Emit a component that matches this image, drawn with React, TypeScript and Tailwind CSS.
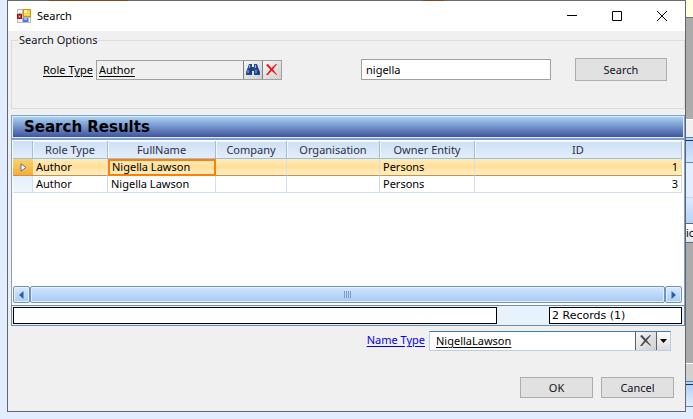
import React from "react";

type Row = { role: string; name: string; company: string; org: string; entity: string; id: number };

const rows: Row[] = [
  { role: "Author", name: "Nigella Lawson", company: "", org: "", entity: "Persons", id: 1 },
  { role: "Author", name: "Nigella Lawson", company: "", org: "", entity: "Persons", id: 3 },
];

const columns = ["Role Type", "FullName", "Company", "Organisation", "Owner Entity", "ID"];

function FormIcon() {
  return (
    <svg width="14" height="14" viewBox="0 0 14 14" shapeRendering="crispEdges" aria-hidden="true">
      <rect width="14" height="14" fill="#b9babd" />
      <rect x="1" y="1" width="4" height="3" fill="#f4f4f6" />
      <rect x="1" y="10" width="4" height="3" fill="#f4f4f6" />
      <rect x="12" y="9" width="1" height="4" fill="#f4f4f6" />
      <rect x="6" y="0" width="8" height="8" fill="#c79512" />
      <rect x="7" y="1" width="6" height="6" fill="#fbd643" />
      <rect x="7" y="1" width="3" height="3" fill="#fff0a0" />
      <rect x="0" y="5" width="5" height="5" fill="#a01414" />
      <rect x="1" y="6" width="3" height="3" fill="#d63a2e" />
      <rect x="2" y="7" width="1" height="1" fill="#ffd0c8" />
      <rect x="6" y="9" width="5" height="4" fill="#3f7fe0" />
      <rect x="7" y="9" width="3" height="2" fill="#8fbcff" />
    </svg>
  );
}

function BinocularsIcon() {
  return (
    <svg width="14" height="13" viewBox="0 0 14 13" aria-hidden="true">
      <path d="M3 1h3v3h2V1h3l1 3 2 5v3H8V8H6v4H0V9l2-5z" fill="#26488c" />
      <path d="M3.500 2v3M9.500 2v3M2 7v3M10 7v3" stroke="#8fb4e8" strokeWidth="1" />
      <path d="M5 5v6M12 8v3" stroke="#122c66" strokeWidth="1" />
    </svg>
  );
}

function CrossIcon({ color }: { color: string }) {
  return (
    <svg width="12" height="12" viewBox="0 0 12 12" aria-hidden="true">
      <path d="M0 1 2 0 5.500 4 10 0 11 .5 6.800 5.300 11 10.500 10.500 11 5.500 6.800 2 11 0 11 4.300 5.500z" fill={color} />
    </svg>
  );
}

const toolButton = "flex items-center justify-center bg-linear-to-br from-[#f7f7f8] to-[#cfcfd1]";
const pushButton = "border border-[#adadad] bg-[#e1e1e1] text-center text-[#10101c]";
const scrollButton =
  "flex w-[17px] items-center justify-center rounded-[2px] border border-[#6f93c0] bg-linear-to-b from-[#d9e9fc] to-[#a9cdf6] shadow-[inset_0_0_0_1px_#e4f0fd]";

function TitleBar() {
  return (
    <header className="flex h-[30px] items-center bg-white pl-[9px] text-black">
      <FormIcon />
      <h1 className="flex-1 pl-[6px]">Search</h1>
      <button aria-label="Minimize" className="flex h-full w-[45px] items-center justify-center">
        <svg width="10" height="10" viewBox="0 0 10 10"><path d="M0 4.500h10" stroke="#000" /></svg>
      </button>
      <button aria-label="Maximize" className="flex h-full w-[45px] items-center justify-center">
        <svg width="10" height="10" viewBox="0 0 10 10"><path d="M.5.500h9v9h-9z" fill="none" stroke="#000" /></svg>
      </button>
      <button aria-label="Close" className="flex h-full w-[46px] items-center justify-center">
        <svg width="10" height="10" viewBox="0 0 10 10"><path d="M0 0l10 10M10 0L0 10" stroke="#000" /></svg>
      </button>
    </header>
  );
}

function SearchOptions() {
  return (
    <fieldset className="ml-[3px] h-[77px] border border-[#dcdcdc] px-[7px]">
      <legend className="leading-[16px] text-[#10101c]">Search Options</legend>
      <div className="flex items-center pr-[10px] pl-[24px] pt-[10px]">
        <label htmlFor="role" className="w-[53px] shrink-0 pt-px underline underline-offset-2">Role Type</label>
        <div className="flex h-[20px] w-[186px] shrink-0 border border-[#a0a0a0]">
          <input id="role" readOnly defaultValue="Author" className="min-w-0 flex-1 bg-transparent pt-px pl-[2px] underline underline-offset-2 outline-none" />
          <button aria-label="Find role type" className={`${toolButton} w-[19px] border-l border-[#808080]`}><BinocularsIcon /></button>
          <button aria-label="Clear role type" className={`${toolButton} w-[19px] border-l border-[#808080]`}><CrossIcon color="#f01414" /></button>
        </div>
        <input aria-label="Search text" defaultValue="nigella" className="ml-auto h-[21px] w-[190px] border border-[#a0a0a0] bg-white pl-[4px] outline-none" />
        <button className={`${pushButton} ml-[24px] h-[23px] w-[92px]`}>Search</button>
      </div>
    </fieldset>
  );
}

function ResultsTable() {
  return (
    <table className="w-full table-fixed border-separate border-spacing-0">
      <colgroup>
        <col className="w-[20px]" />
        <col className="w-[75px]" />
        <col className="w-[108px]" />
        <col className="w-[71px]" />
        <col className="w-[93px]" />
        <col className="w-[95px]" />
        <col />
      </colgroup>
      <thead>
        <tr className="h-[18px] text-[#2c2f4a]">
          <td className="border-r border-b border-[#9cbfe0] bg-linear-to-b from-[#cddff3] to-[#e3eefc] p-0" />
          {columns.map((c) => (
            <th key={c} scope="col" className="border-r border-b border-[#9cbfe0] bg-linear-to-b from-[#cddff3] to-[#e3eefc] p-0 text-center font-normal shadow-[inset_1px_1px_0_#f4f9ff]">
              {c}
            </th>
          ))}
        </tr>
      </thead>
      <tbody>
        {rows.map((r, i) => {
          const active = i === 0;
          const cell = active
            ? "border-r border-r-[#cfdff0] border-b border-b-[#dc8a40] bg-linear-to-b from-[#ffecb8] via-[#ffe09a] to-[#fff0c4] px-[3px] py-0"
            : "border-r border-b border-[#cfdff0] bg-white px-[3px] py-0";
          return (
            <tr key={r.id} className="h-[17px] leading-[16px]">
              <td className={active ? "border-b border-b-[#dc8a40] bg-linear-to-b from-[#fbd26c] to-[#f3ae35] p-0" : "border-r border-b border-[#cfdff0] bg-linear-to-b from-[#e3eefc] to-[#f0f6fe] p-0"}>
                {active && (
                  <svg className="mx-auto" width="7" height="9" viewBox="0 0 7 9" aria-label="Current row"><path d="M1 .8 5.800 4.500 1 8.200z" fill="#fff" stroke="#5b6f94" /></svg>
                )}
              </td>
              <td className={cell}>{r.role}</td>
              <td className={active ? `${cell} pl-[4px] outline-2 -outline-offset-2 outline-[#ff8000]` : cell}>{r.name}</td>
              <td className={cell}>{r.company}</td>
              <td className={cell}>{r.org}</td>
              <td className={cell}>{r.entity}</td>
              <td className={`${cell} text-right`}>{r.id}</td>
            </tr>
          );
        })}
      </tbody>
    </table>
  );
}

function ScrollBar() {
  return (
    <div className="mr-[2px] flex h-[17px]">
      <button aria-label="Scroll left" className={scrollButton}>
        <svg width="5" height="8" viewBox="0 0 5 8"><path d="M4.500 0v8L0 4z" fill="#2c5ea8" /></svg>
      </button>
      <div className="flex flex-1 items-center justify-center gap-px rounded-[2px] border border-[#6f93c0] bg-linear-to-b from-[#d3e6fc] to-[#a3caf5] shadow-[inset_0_0_0_1px_#e4f0fd]">
        <i className="h-[7px] w-px bg-[#7a9cc8]" />
        <i className="h-[7px] w-px bg-[#7a9cc8]" />
        <i className="h-[7px] w-px bg-[#7a9cc8]" />
        <i className="h-[7px] w-px bg-[#7a9cc8]" />
      </div>
      <button aria-label="Scroll right" className={scrollButton}>
        <svg width="5" height="8" viewBox="0 0 5 8"><path d="M.5 0v8L5 4z" fill="#2c5ea8" /></svg>
      </button>
    </div>
  );
}

function Results() {
  return (
    <section className="mt-[6px] ml-[3px]">
      <div className="border border-[#7da2cc] bg-[#dcecfb] p-px">
        <h2 className="h-[20px] bg-linear-to-b from-[#a9d1f2] to-[#41549f] pl-[11px] font-['DejaVu_Sans'] text-[15px] leading-[20px] font-bold text-black">Search Results</h2>
      </div>
      <div className="flex h-[166px] flex-col border-x border-t border-[#7da2cc] bg-white pt-px pl-px">
        <div className="flex-1 pr-[2px]"><ResultsTable /></div>
        <ScrollBar />
        <div className="h-[2px]" />
      </div>
      <div className="flex h-[21px] justify-between border border-[#6d8cab] bg-[#e8f2fc] py-px pr-[2px] pl-px font-['DejaVu_Sans'] text-[11px] leading-[15px]">
        <output className="mr-[52px] flex-1 border border-black bg-white" />
        <output className="w-[133px] border border-black bg-white pl-[2px]">2 Records (1)</output>
      </div>
    </section>
  );
}

function Dialog() {
  return (
    <main className="flex min-w-0 flex-1 flex-col border-x border-b border-[#636568] bg-[#f0f0f0]">
      <TitleBar />
      <div className="h-px" />
      <SearchOptions />
      <Results />
      <div className="mt-[5px] flex items-center justify-end pr-[14px]">
        <label htmlFor="nametype" className="mr-[4px] pb-[2px] text-[#0000f0] underline underline-offset-2">Name Type</label>
        <div className="flex h-[20px] w-[242px] border border-[#b5cfe7] border-t-[#3d7bad] bg-white">
          <input id="nametype" defaultValue="NigellaLawson" className="min-w-0 flex-1 pl-[6px] underline underline-offset-2 outline-none" />
          <button aria-label="Clear name type" className={`${toolButton} w-[21px] border-l border-[#606060]`}><CrossIcon color="#484848" /></button>
          <button aria-label="Open name types" className="flex w-[14px] items-center justify-center border-l border-[#606060] bg-linear-to-b from-white to-[#dcdcdc]">
            <svg width="7" height="4" viewBox="0 0 7 4"><path d="M0 0h7L3.500 4z" fill="#000" /></svg>
          </button>
        </div>
      </div>
      <div className="mt-[26px] mb-[13px] flex justify-end gap-[8px] pr-[11px]">
        <button className={`${pushButton} h-[21px] w-[73px]`}>OK</button>
        <button className={`${pushButton} h-[21px] w-[73px]`}>Cancel</button>
      </div>
    </main>
  );
}

// Slice of the parent window that stays visible beside the dialog.
function ParentEdge() {
  return (
    <aside className="flex w-[7px] shrink-0 flex-col overflow-hidden bg-[#ababab]">
      <div className="h-[18px] border-b border-[#6e7378] bg-[#ffffe1]" />
      <div className="h-[101px]" />
      <div className="h-[18px] border-t border-white bg-[#f0f0f0]" />
      <div className="h-[4px] border-y border-t-[#4a7ebb] border-b-[#16365f] bg-[#b8d2f2]" />
      <div className="h-[22px] border-b border-[#5d87ba] bg-linear-to-b from-[#b5d2f7] to-[#d5e6fb]" />
      <div className="h-[34px] bg-[#e2edff]" />
      <div className="h-[26px] border-t border-[#c0d6f0] bg-linear-to-b from-[#dceaff] to-[#b3d2fb]" />
      <div className="h-[20px] overflow-hidden border-y border-[#606870] bg-linear-to-b from-white to-[#dfe6f0] leading-[18px]">ic</div>
      <div className="h-[120px]" />
      <div className="h-[18px] border-t border-white bg-[#d0d0d0]" />
      <div className="h-[4px] border-y border-t-[#4a7ebb] border-b-[#16365f] bg-[#b8d2f2]" />
      <div className="h-[22px] border-b border-[#5d87ba] bg-linear-to-b from-[#b5d2f7] to-[#e2edff]" />
      <div className="flex-1 bg-[#e2edff]" />
    </aside>
  );
}

export default function App() {
  return (
    <div className="flex min-h-screen flex-col bg-[#e2edff] font-['Noto_Sans',sans-serif] text-[11px] leading-[16px] text-black">
      <div className="flex flex-1">
        <div className="flex min-w-0 flex-1 flex-col">
          <div className="ml-[7px] flex h-px bg-[#66686c]">
            <div className="ml-[42px] w-[79px] bg-[#7d4a20]" />
            <div className="ml-[295px] w-[21px] bg-[#7d4a20]" />
            <div className="flex-1 bg-[#6c6c62]" />
          </div>
          <div className="flex flex-1 pl-[7px]"><Dialog /></div>
          <div className="h-[7px]" />
        </div>
        <ParentEdge />
      </div>
    </div>
  );
}
